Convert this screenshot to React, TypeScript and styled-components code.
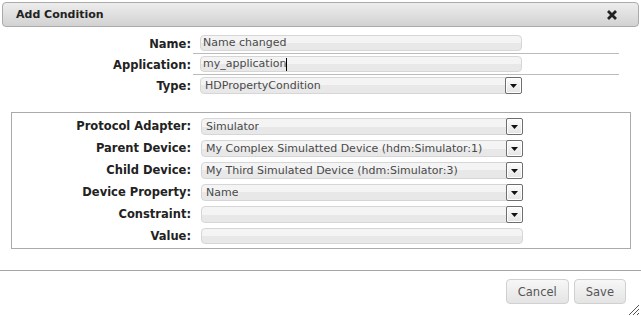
import styled, { createGlobalStyle } from 'styled-components';

type Field = { label: string; value?: string; kind: 'input' | 'select'; caret?: boolean };

const topFields: Field[] = [
  { label: 'Name:', value: 'Name changed', kind: 'input' },
  { label: 'Application:', value: 'my_application', kind: 'input', caret: true },
  { label: 'Type:', value: 'HDPropertyCondition', kind: 'select' },
];

const deviceFields: Field[] = [
  { label: 'Protocol Adapter:', value: 'Simulator', kind: 'select' },
  { label: 'Parent Device:', value: 'My Complex Simulatted Device (hdm:Simulator:1)', kind: 'select' },
  { label: 'Child Device:', value: 'My Third Simulated Device (hdm:Simulator:3)', kind: 'select' },
  { label: 'Device Property:', value: 'Name', kind: 'select' },
  { label: 'Constraint:', kind: 'select' },
  { label: 'Value:', kind: 'input' },
];

const GlobalStyle = createGlobalStyle`
  html, body {
    margin: 0;
    padding: 0;
    background: #fff;
  }
  body {
    font-family: "DejaVu Sans", Verdana, sans-serif;
    font-size: 11px;
    color: #222;
  }
`;

export default function App() {
  return (
    <>
      <GlobalStyle />
      <Dialog>
        <TitleBar>
          <Title>Add Condition</Title>
          <CloseIcon width="10" height="10" viewBox="0 0 10 10">
            <path d="M2 2 L8 8 M8 2 L2 8" stroke="#222" strokeWidth="2.8" strokeLinecap="square" />
          </CloseIcon>
        </TitleBar>
        <Body>
          <FormGrid $labelWidth={192}>
            {topFields.map((f, i) => (
              <FieldRow key={i} {...f} underline={f.kind === 'input'} />
            ))}
          </FormGrid>
          <DeviceBox>
            <FormGrid $labelWidth={180}>
              {deviceFields.map((f, i) => (
                <FieldRow key={i} {...f} underline={false} boxed />
              ))}
            </FormGrid>
          </DeviceBox>
        </Body>
        <Footer>
          <Button>Cancel</Button>
          <Button>Save</Button>
        </Footer>
        <Grip width="12" height="11" viewBox="0 0 12 11">
          <path d="M11 1 L1 11 M11 5 L5 11 M11 9 L9 11" stroke="#555" strokeWidth="1" />
        </Grip>
      </Dialog>
    </>
  );
}

function FieldRow({ label, value, kind, caret, underline, boxed }: Field & { underline: boolean; boxed?: boolean }) {
  return (
    <>
      <Label $boxed={boxed}>{label}</Label>
      <Cell $underline={underline} $boxed={boxed}>
        {kind === 'input' ? (
          <TextBox>
            {value}
            {caret && <Caret />}
          </TextBox>
        ) : (
          <SelectBox>
            <SelectText>{value}</SelectText>
            <DropButton>
              <svg width="7" height="4" viewBox="0 0 7 4">
                <path d="M0 0 H7 L3.5 4 Z" fill="#111" />
              </svg>
            </DropButton>
          </SelectBox>
        )}
      </Cell>
    </>
  );
}

const Dialog = styled.div`
  position: relative;
  width: 641px;
  height: 316px;
  overflow: hidden;
`;

const TitleBar = styled.div`
  margin: 2px 2px 0 2px;
  height: 23px;
  border: 1px solid #aaa;
  border-radius: 4px;
  background: linear-gradient(#ededed, #d2d2d2);
  display: flex;
  align-items: center;
  justify-content: space-between;
  padding: 0 21px 0 13px;
`;

const Title = styled.span`
  font-weight: bold;
  font-size: 11px;
  color: #222;
`;

const CloseIcon = styled.svg`
  display: block;
`;

const Body = styled.div`
  padding-top: 6px;
`;

const FormGrid = styled.div<{ $labelWidth: number }>`
  display: grid;
  grid-template-columns: ${(p) => p.$labelWidth}px 427px;
  align-items: stretch;
`;

const Label = styled.div<{ $boxed?: boolean }>`
  font-weight: bold;
  font-size: 11.5px;
  text-align: right;
  padding-right: 1px;
  display: flex;
  align-items: center;
  justify-content: flex-end;
  height: ${(p) => (p.$boxed ? '22px' : '21px')};
`;

const Cell = styled.div<{ $underline: boolean; $boxed?: boolean }>`
  display: flex;
  align-items: center;
  padding-left: ${(p) => (p.$boxed ? '9px' : '7px')};
  margin-left: ${(p) => (p.$boxed ? '0' : '1px')};
  height: ${(p) => (p.$boxed ? '22px' : '20px')};
  border-bottom: ${(p) => (p.$underline ? '1px solid #bbb' : 'none')};
`;

const TextBox = styled.div`
  box-sizing: border-box;
  width: 322px;
  height: 16px;
  border: 1px solid #d6d6d6;
  border-radius: 4px;
  background: linear-gradient(#f4f4f4 50%, #e8e8e8 50%);
  color: #4a4a4a;
  padding: 0 2px;
  line-height: 14px;
  display: flex;
  align-items: center;
  white-space: nowrap;
`;

const Caret = styled.span`
  display: inline-block;
  width: 1px;
  height: 13px;
  background: #000;
`;

const SelectBox = styled.div`
  box-sizing: border-box;
  width: 322px;
  height: 17px;
  border: 1px solid #d6d6d6;
  border-radius: 4px;
  background: linear-gradient(#f4f4f4 50%, #e8e8e8 50%);
  color: #4a4a4a;
  display: flex;
  align-items: center;
  justify-content: space-between;
  padding: 0 0 0 4px;
`;

const SelectText = styled.span`
  white-space: nowrap;
  overflow: hidden;
`;

const DropButton = styled.span`
  box-sizing: border-box;
  flex: none;
  width: 17px;
  height: 17px;
  margin-right: -1px;
  border: 1px solid #6e6e6e;
  border-radius: 2px;
  background: linear-gradient(#fdfdfd, #e4e4e4);
  box-shadow: inset 0 0 0 1px #fff;
  display: flex;
  align-items: center;
  justify-content: center;
  padding-top: 1px;
`;

const DeviceBox = styled.div`
  margin: 16px 0 0 11px;
  width: 620px;
  box-sizing: border-box;
  border: 1px solid #aaa;
  padding: 2px 0 1px 0;
`;

const Footer = styled.div`
  border-top: 1px solid #a5a5a5;
  margin-top: 21px;
  display: flex;
  justify-content: flex-end;
  gap: 5px;
  padding: 8px 15px 0 0;
`;

const Button = styled.button`
  font-family: "DejaVu Sans", Verdana, sans-serif;
  font-size: 11.5px;
  color: #555;
  height: 25px;
  padding: 0 11px;
  border: 1px solid #d0d0d0;
  border-radius: 4px;
  background: linear-gradient(#f7f7f7, #e4e4e4);
`;

const Grip = styled.svg`
  position: absolute;
  right: 1px;
  bottom: 1px;
`;
